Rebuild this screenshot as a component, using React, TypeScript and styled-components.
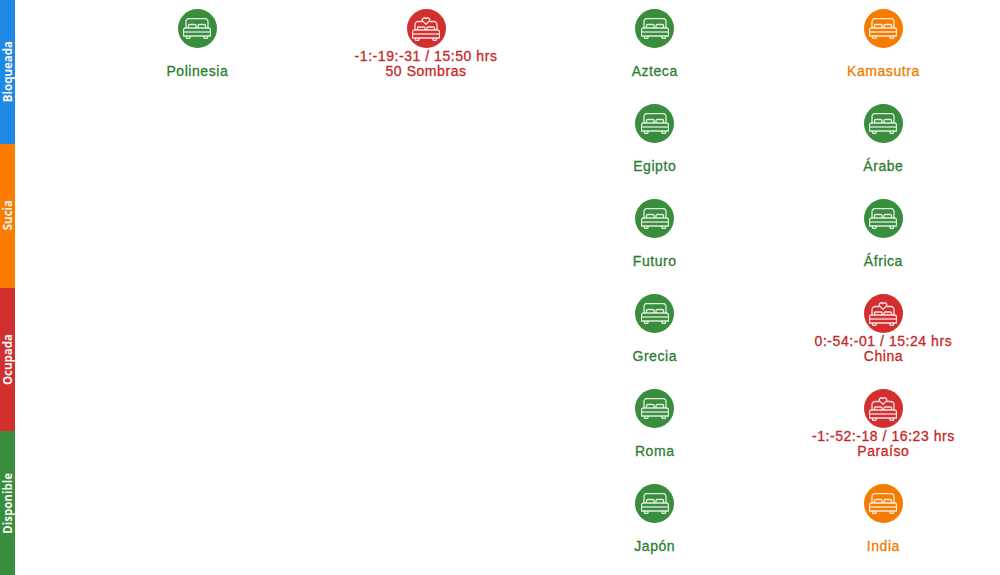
import { createGlobalStyle, styled } from 'styled-components'

type Status = 'free' | 'dirty' | 'busy'

type Room = {
  name: string
  status: Status
  time?: string
}

const colors: Record<Status, string> = {
  free: '#388e3c',
  dirty: '#f57c00',
  busy: '#d32f2f',
}

const textColors: Record<Status, string> = {
  free: '#2e7d32',
  dirty: '#ef7c00',
  busy: '#c62828',
}

const legend = [
  { label: 'Bloqueada', color: '#1e88e5' },
  { label: 'Sucia', color: '#fb7d00' },
  { label: 'Ocupada', color: '#d32f2f' },
  { label: 'Disponible', color: '#388e3c' },
]

const columns: Room[][] = [
  [{ name: 'Polinesia', status: 'free' }],
  [{ name: '50 Sombras', status: 'busy', time: '-1:-19:-31 / 15:50 hrs' }],
  [
    { name: 'Azteca', status: 'free' },
    { name: 'Egipto', status: 'free' },
    { name: 'Futuro', status: 'free' },
    { name: 'Grecia', status: 'free' },
    { name: 'Roma', status: 'free' },
    { name: 'Japón', status: 'free' },
  ],
  [
    { name: 'Kamasutra', status: 'dirty' },
    { name: 'Árabe', status: 'free' },
    { name: 'África', status: 'free' },
    { name: 'China', status: 'busy', time: '0:-54:-01 / 15:24 hrs' },
    { name: 'Paraíso', status: 'busy', time: '-1:-52:-18 / 16:23 hrs' },
    { name: 'India', status: 'dirty' },
  ],
]

function BedIcon({ heart }: { heart: boolean }) {
  if (heart) {
    return (
      <svg width="28" height="25" viewBox="0 0 28 25" fill="none" stroke="#fff" strokeOpacity="0.85" strokeWidth="1.3" strokeLinejoin="round">
        <path d="M3 14V8.500a3 3 0 0 1 3-3h4.500M25 14V8.500a3 3 0 0 0-3-3h-4.500" />
        <path d="M14 8.300l-3.200-3.200a2 2 0 0 1 3.200-2.500 2 2 0 0 1 3.200 2.500z" />
        <path d="M5.500 14v-2a1 1 0 0 1 1-1h5.500a1 1 0 0 1 1 1v2M15 14v-2a1 1 0 0 1 1-1h5.500a1 1 0 0 1 1 1v2" />
        <path d="M2.500 14h23a2 2 0 0 1 2 2v6H.5v-6a2 2 0 0 1 2-2z" />
        <path d="M.5 18h27" />
        <path d="M3.500 22v1.500a1 1 0 0 0 1 1h1.500a1 1 0 0 0 1-1V22M21 22v1.500a1 1 0 0 0 1 1h1.500a1 1 0 0 0 1-1V22" />
      </svg>
    )
  }
  return (
    <svg width="28" height="21" viewBox="0 0 28 21" fill="none" stroke="#fff" strokeOpacity="0.85" strokeWidth="1.3" strokeLinejoin="round">
      <path d="M3 10V3.500a3 3 0 0 1 3-3h16a3 3 0 0 1 3 3V10" />
      <path d="M5.500 10V7.500a1 1 0 0 1 1-1h5.500a1 1 0 0 1 1 1V10M15 10V7.500a1 1 0 0 1 1-1h5.500a1 1 0 0 1 1 1V10" />
      <path d="M2.500 10h23a2 2 0 0 1 2 2v6H.5v-6a2 2 0 0 1 2-2z" />
      <path d="M.5 14h27" />
      <path d="M3.500 18v1.500a1 1 0 0 0 1 1h1.500a1 1 0 0 0 1-1V18M21 18v1.500a1 1 0 0 0 1 1h1.500a1 1 0 0 0 1-1V18" />
    </svg>
  )
}

export default function App() {
  return (
    <>
      <GlobalStyle />
      <Page>
        <Sidebar>
          {legend.map((item) => (
            <LegendItem key={item.label} $color={item.color}>
              <LegendText>{item.label}</LegendText>
            </LegendItem>
          ))}
        </Sidebar>
        <Board>
          {columns.map((rooms, i) => (
            <Column key={i}>
              {rooms.map((room) => (
                <Cell key={room.name} $color={textColors[room.status]}>
                  <Circle $color={colors[room.status]}>
                    <BedIcon heart={room.status === 'busy'} />
                  </Circle>
                  <Time>{room.time}</Time>
                  <Name>{room.name}</Name>
                </Cell>
              ))}
            </Column>
          ))}
        </Board>
      </Page>
    </>
  )
}

const GlobalStyle = createGlobalStyle`
  html, body {
    margin: 0;
    padding: 0;
    background: #fff;
  }
`

const Page = styled.div`
  display: flex;
  width: 1000px;
  height: 575px;
  overflow: hidden;
`

const Sidebar = styled.div`
  display: flex;
  flex-direction: column;
  width: 15px;
  height: 575px;
  flex-shrink: 0;
`

const LegendItem = styled.div<{ $color: string }>`
  flex: 1;
  display: flex;
  align-items: center;
  justify-content: center;
  background: ${(p) => p.$color};
`

const LegendText = styled.span`
  writing-mode: vertical-rl;
  transform: rotate(180deg);
  font-family: 'Open Sans', sans-serif;
  font-size: 11.5px;
  font-weight: 700;
  line-height: 14px;
  color: #f4f4f4;
`

const Board = styled.div`
  flex: 1;
  display: grid;
  grid-template-columns: repeat(4, 228.7px);
  padding-left: 68px;
`

const Column = styled.div`
  display: flex;
  flex-direction: column;
`

const Cell = styled.div<{ $color: string }>`
  display: flex;
  flex-direction: column;
  align-items: center;
  height: 95px;
  padding-top: 9px;
  box-sizing: border-box;
  font-family: 'Liberation Sans', Arial, sans-serif;
  font-size: 14px;
  letter-spacing: 0.55px;
  -webkit-text-stroke: 0.3px currentColor;
  line-height: 15px;
  color: ${(p) => p.$color};
`

const Circle = styled.div<{ $color: string }>`
  display: flex;
  align-items: center;
  justify-content: center;
  width: 39px;
  height: 39px;
  border-radius: 50%;
  background: ${(p) => p.$color};
`

const Time = styled.div`
  height: 15px;
  margin-top: 1px;
  white-space: nowrap;
`

const Name = styled.div`
  white-space: nowrap;
`
